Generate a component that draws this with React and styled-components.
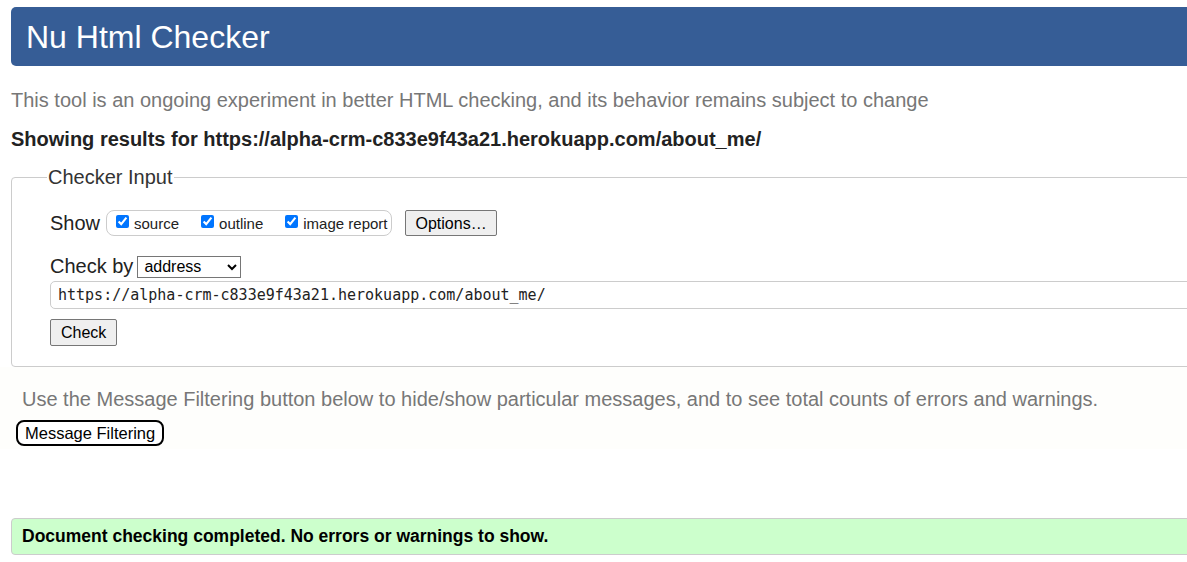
import React from "react";
import styled, { createGlobalStyle } from "styled-components";

const Global = createGlobalStyle`
  html, body { margin: 0; padding: 0; overflow: hidden; background: #fff; }
  body { font-family: "Liberation Sans", Arial, sans-serif; color: #222; }
`;

const Page = styled.div`
  width: 1290px;
  padding: 7px 0 0 11px;
  box-sizing: border-box;
`;

const Header = styled.header`
  height: 59px;
  background: #365d96;
  border-radius: 5px;
  display: flex;
  align-items: center;
  padding: 0 0 0 15px;
  box-sizing: border-box;
`;

const Title = styled.h1`
  margin: 0;
  font-size: 32px;
  font-weight: normal;
  color: #fff;
  line-height: 1;
`;

const Intro = styled.p`
  margin: 22px 0 0;
  font-size: 20px;
  line-height: 24px;
  color: #777;
`;

const Results = styled.p`
  margin: 15px 0 0;
  font-size: 20px;
  line-height: 24px;
  font-weight: bold;
  color: #222;
`;

const Fieldset = styled.fieldset`
  margin: 15px 0 0;
  padding: 9px 0 20px 38px;
  border: 1px solid #ccc;
  border-radius: 4px;
  min-inline-size: 0;
`;

const Legend = styled.legend`
  font-size: 20px;
  color: #333;
  padding: 0 1px;
  margin-left: -3px;
`;

const Row = styled.div`
  display: flex;
  align-items: center;
  margin-top: ${(p) => p.$mt || 0}px;
`;

const Label = styled.span`
  font-size: 20px;
  color: #222;
  margin-right: ${(p) => p.$mr || 0}px;
`;

const CheckGroup = styled.div`
  display: flex;
  align-items: center;
  height: 24px;
  padding: 0 4px 0 9px;
  border: 1px solid #ccc;
  border-radius: 8px;
  margin-right: 13px;
  gap: 22px;
`;

const CheckItem = styled.label`
  display: flex;
  align-items: center;
  font-size: 15px;
  color: #222;
  gap: 5px;
`;

const Box = styled.input.attrs({ type: "checkbox" })`
  margin: 0 0 3px;
  width: 13px;
  height: 13px;
  accent-color: #0075ff;
`;

const Button = styled.button`
  font-family: "Liberation Sans", Arial, sans-serif;
  font-size: 16px;
  color: #000;
  background: #efefef;
  border: 1px solid #767676;
  border-radius: 2px;
  height: ${(p) => p.$h || 26}px;
  padding: ${(p) => (p.$down ? "2px" : "0")} ${(p) => p.$px || 8}px 0;
  line-height: 1;
`;

const Select = styled.select`
  font-family: "Liberation Sans", Arial, sans-serif;
  font-size: 16px;
  height: 22px;
  width: 104px;
  border: 1px solid #767676;
  border-radius: 0;
  background: #fff;
  color: #000;
  padding: 0 0 0 2px;
`;

const UrlInput = styled.input`
  display: block;
  margin-top: 3px;
  width: 100%;
  height: 28px;
  box-sizing: border-box;
  border: 1px solid #ccc;
  border-radius: 5px;
  font-family: "DejaVu Sans Mono", "Liberation Mono", monospace;
  font-size: 15px;
  padding: 0 7px;
  color: #222;
  background: #fff;
`;

const FilterSection = styled.section`
  margin-left: -11px;
  padding: 20px 0 0 22px;
  background: #fefefc;
  height: 82px;
  box-sizing: border-box;
`;

const FilterText = styled.p`
  margin: 0;
  font-size: 20px;
  line-height: 24px;
  color: #777;
`;

const FilterButton = styled.button`
  margin: 9px 0 0 -6px;
  font-family: "Liberation Sans", Arial, sans-serif;
  font-size: 16.5px;
  color: #000;
  background: #fff;
  border: 2px solid #000;
  border-radius: 8px;
  height: 26px;
  padding: 0 7px;
  line-height: 1;
`;

const Success = styled.div`
  margin-top: 69px;
  height: 37px;
  background: #ccffcc;
  border: 1px solid #ccc;
  border-radius: 4px;
  box-sizing: border-box;
  display: flex;
  align-items: center;
  padding: 0 0 0 10px;
  font-size: 17.5px;
  font-weight: bold;
  color: #000;
`;

export default function App() {
  const url = "https://alpha-crm-c833e9f43a21.herokuapp.com/about_me/";
  return (
    <Page>
      <Global />
      <Header>
        <Title>Nu Html Checker</Title>
      </Header>
      <Intro>
        This tool is an ongoing experiment in better HTML checking, and its behavior remains subject to change
      </Intro>
      <Results>Showing results for {url}</Results>
      <Fieldset>
        <Legend>Checker Input</Legend>
        <Row $mt={12}>
          <Label $mr={6}>Show</Label>
          <CheckGroup>
            <CheckItem>
              <Box defaultChecked /> source
            </CheckItem>
            <CheckItem>
              <Box defaultChecked /> outline
            </CheckItem>
            <CheckItem>
              <Box defaultChecked /> image report
            </CheckItem>
          </CheckGroup>
          <Button $h={26} $px={9} $down>Options…</Button>
        </Row>
        <Row $mt={19}>
          <Label $mr={4}>Check by</Label>
          <Select defaultValue="address">
            <option value="address">address</option>
            <option value="file">file upload</option>
            <option value="text">text input</option>
          </Select>
        </Row>
        <UrlInput defaultValue={url} />
        <Row $mt={10}>
          <Button $h={27} $px={10}>Check</Button>
        </Row>
      </Fieldset>
      <FilterSection>
        <FilterText>
          Use the Message Filtering button below to hide/show particular messages, and to see total counts of errors and warnings.
        </FilterText>
        <FilterButton>Message Filtering</FilterButton>
      </FilterSection>
      <Success>Document checking completed. No errors or warnings to show.</Success>
    </Page>
  );
}
